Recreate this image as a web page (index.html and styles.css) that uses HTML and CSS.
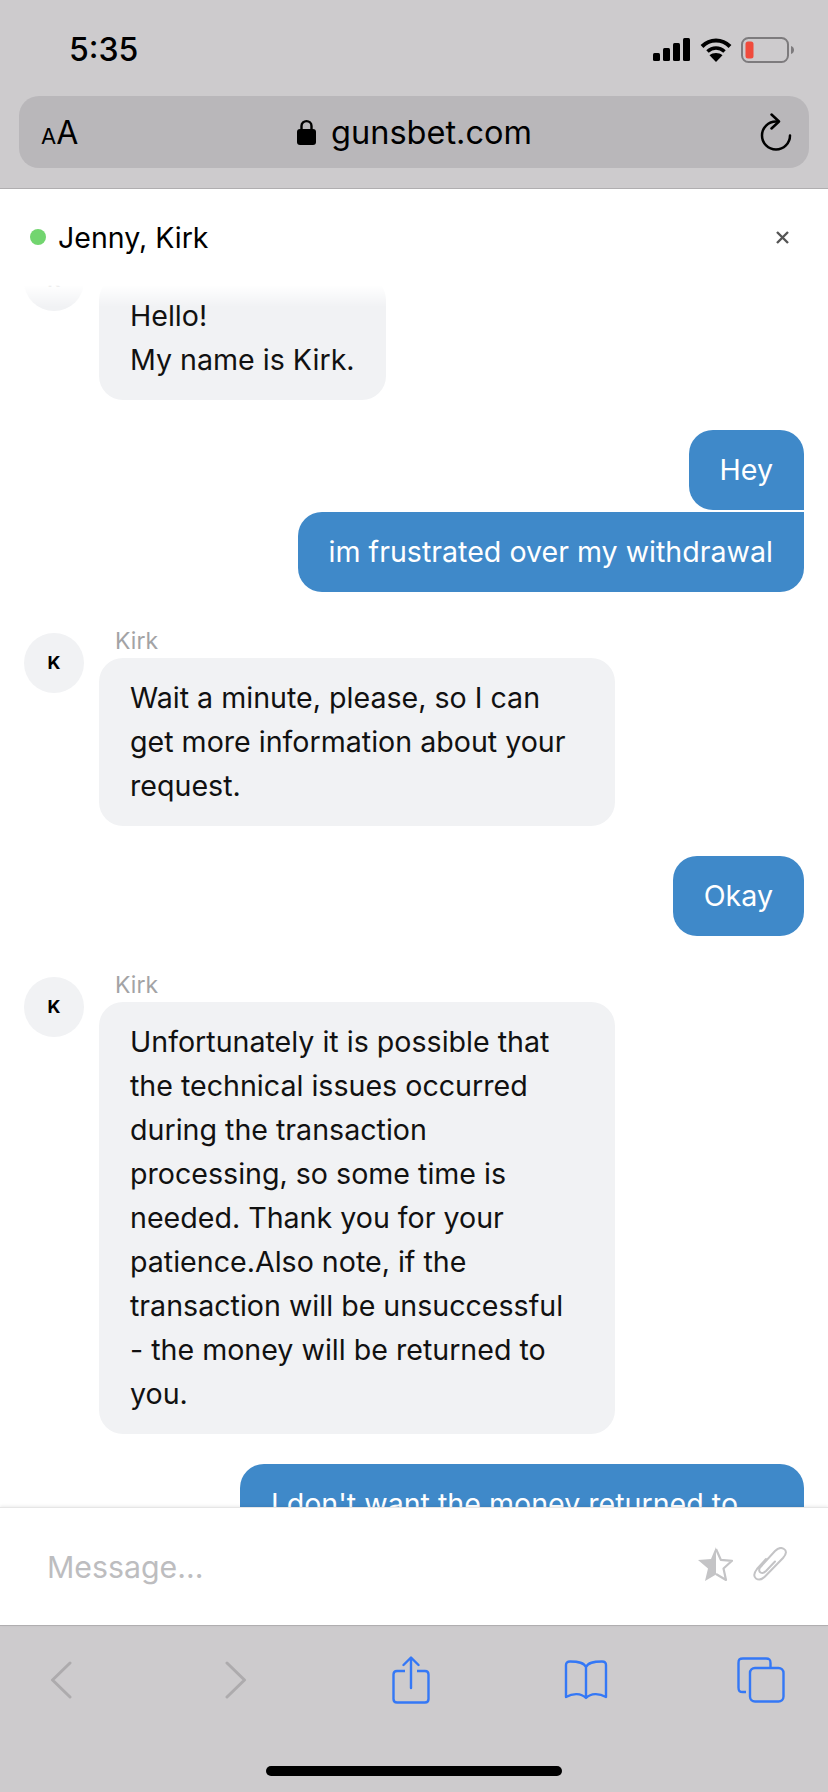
FILE: index.html
```html
<!DOCTYPE html>
<html lang="en">
<head>
    <meta charset="UTF-8">
    <meta name="viewport" content="width=device-width, initial-scale=1.0">
    <title>Chat</title>
    <link rel="stylesheet" href="styles.css">
</head>
<body>
    <div class="phone">
        <!-- Safari top -->
        <div class="safari-top">
            <div class="status-bar">
                <span class="time">5:35</span>
                <div class="status-icons">
                    <svg width="37" height="23" viewBox="0 0 37 23">
                        <rect x="0" y="15" width="7" height="8" rx="1.5"/>
                        <rect x="10" y="10" width="7" height="13" rx="1.5"/>
                        <rect x="20" y="5" width="7" height="18" rx="1.5"/>
                        <rect x="30" y="0" width="7" height="23" rx="1.5"/>
                    </svg>
                    <svg width="32" height="24" viewBox="0 0 32 24">
                        <path d="M2 8.5 C10 0.5 22 0.5 30 8.5" fill="none" stroke="#000" stroke-width="4"/>
                        <path d="M7.5 13.5 C12.5 8.8 19.5 8.8 24.5 13.5" fill="none" stroke="#000" stroke-width="3.6"/>
                        <path d="M16 24 L9.5 17.3 C13 14.2 19 14.2 22.5 17.3 Z"/>
                    </svg>
                    <svg class="battery" width="54" height="26" viewBox="0 0 54 26">
                        <rect x="1" y="1" width="46" height="24" rx="6.5" fill="none" stroke="#7d7b7d" stroke-width="2"/>
                        <rect x="4.500" y="4.500" width="8" height="17" rx="2.500" fill="#f04b3c"/>
                        <path d="M50 9 C52.500 10 53 11.500 53 13 C53 14.500 52.500 16 50 17 Z" fill="#7d7b7d"/>
                    </svg>
                </div>
            </div>
            <div class="url-bar">
                <span class="aa"><small>A</small>A</span>
                <div class="url">
                    <svg width="19" height="26" viewBox="0 0 19 26">
                        <path d="M4.500 12 V7 C4.500 0.500 14.500 0.500 14.500 7 V12" fill="none" stroke="#000" stroke-width="2.400"/>
                        <rect x="0" y="10" width="19" height="16" rx="3"/>
                    </svg>
                    <span>gunsbet.com</span>
                </div>
                <svg class="reload" width="32" height="38" viewBox="0 0 32 38">
                    <path d="M30 22.500 A14 14 0 1 1 16 8.500 H18" fill="none" stroke="#000" stroke-width="2.500" stroke-linecap="round"/>
                    <path d="M11.500 1.500 L19 8.500 L11.500 15.500" fill="none" stroke="#000" stroke-width="2.500" stroke-linecap="round" stroke-linejoin="round"/>
                </svg>
            </div>
        </div>

        <!-- Chat header -->
        <div class="chat-header">
            <div class="agents">
                <span class="online-dot"></span>
                <span>Jenny, Kirk</span>
            </div>
            <svg width="15" height="15" viewBox="0 0 15 15">
                <path d="M2 2 L13 13 M13 2 L2 13" stroke="#555" stroke-width="2.400"/>
            </svg>
        </div>

        <!-- Messages, scrolled part way down -->
        <div class="messages">
            <div class="messages-inner">
                <div class="row-agent first">
                    <div class="avatar">K</div>
                    <div class="bubble agent">Hello!<br>My name is Kirk.</div>
                </div>

                <div class="row-user group">
                    <div class="bubble user top">Hey</div>
                    <div class="bubble user bottom">im frustrated over my withdrawal</div>
                </div>

                <div class="row-agent">
                    <div class="avatar">K</div>
                    <div class="agent-col">
                        <div class="agent-name">Kirk</div>
                        <div class="bubble agent">Wait a minute, please, so I can get more information about your request.</div>
                    </div>
                </div>

                <div class="row-user">
                    <div class="bubble user">Okay</div>
                </div>

                <div class="row-agent">
                    <div class="avatar">K</div>
                    <div class="agent-col">
                        <div class="agent-name">Kirk</div>
                        <div class="bubble agent">Unfortunately it is possible that the technical issues occurred during the transaction processing, so some time is needed. Thank you for your patience.Also note, if the transaction will be unsuccessful - the money will be returned to you.</div>
                    </div>
                </div>

                <div class="row-user">
                    <div class="bubble user wide">I don't want the money returned to me</div>
                </div>
            </div>
            <div class="top-fade"></div>
        </div>

        <!-- Message input -->
        <div class="composer">
            <span class="placeholder">Message...</span>
            <div class="composer-icons">
                <svg width="38" height="36" viewBox="0 0 38 36">
                    <path d="M19 1 L19 28.500 L8 35 L11 22.500 L1 14 L14 13 Z" fill="#c4c4c6"/>
                    <path d="M19 3 L23.800 13.800 L35 14.800 L26.500 22.500 L29 34 L19 28" fill="none" stroke="#c4c4c6" stroke-width="2.200" stroke-linejoin="round"/>
                </svg>
                <svg width="36" height="34" viewBox="0 0 36 34">
                    <path d="M14 12 L5 22 C1 27 2 30 4 31.500 C7 33.500 10 32.500 13 29.500 L31 11 C35 6.500 34.500 3.500 32 2 C29 0 26 1 23 4 L8.500 20 C6.500 22.500 7 24.500 8.500 25.500 C10 26.500 12 26 14 24 L23 14.500" fill="none" stroke="#c4c4c6" stroke-width="2" stroke-linecap="round"/>
                </svg>
            </div>
        </div>

        <!-- Safari bottom -->
        <div class="safari-bottom">
            <div class="toolbar">
                <svg width="22" height="38" viewBox="0 0 22 38"><path d="M20 2 L2.500 19 L20 36" fill="none" stroke="#adabad" stroke-width="3" stroke-linecap="round" stroke-linejoin="round"/></svg>
                <svg width="22" height="38" viewBox="0 0 22 38"><path d="M2 2 L19.500 19 L2 36" fill="none" stroke="#adabad" stroke-width="3" stroke-linecap="round" stroke-linejoin="round"/></svg>
                <svg width="38" height="48" viewBox="0 0 38 48">
                    <path d="M13 15 H5 C2.500 15 1.500 16 1.500 18.500 V43 C1.500 45.500 2.500 46.500 5 46.500 H33 C35.500 46.500 36.500 45.500 36.500 43 V18.500 C36.500 16 35.500 15 33 15 H25" fill="none" stroke="#3478f6" stroke-width="2.400"/>
                    <path d="M19 32 V2 M11.500 9 L19 1.500 L26.500 9" fill="none" stroke="#3478f6" stroke-width="2.400" stroke-linecap="round" stroke-linejoin="round"/>
                </svg>
                <svg width="44" height="40" viewBox="0 0 44 40">
                    <path d="M22 7 C20 2.500 15 1.500 6 1.500 C3.500 1.500 2 2.500 2 5 V37 C9 33 17 33 22 38 C27 33 35 33 42 37 V5 C42 2.500 40.500 1.500 38 1.500 C29 1.500 24 2.500 22 7 V38" fill="none" stroke="#3478f6" stroke-width="2.400" stroke-linejoin="round"/>
                </svg>
                <svg width="48" height="46" viewBox="0 0 48 46">
                    <path d="M9 35 H6 C2.500 35 1.500 34 1.500 30.500 V6 C1.500 2.500 2.500 1.500 6 1.500 H29 C32.500 1.500 33.500 2.500 33.500 6 V11" fill="none" stroke="#3478f6" stroke-width="2.400"/>
                    <rect x="13" y="11" width="33.500" height="33.500" rx="5" fill="none" stroke="#3478f6" stroke-width="2.400"/>
                </svg>
            </div>
            <div class="home-bar"></div>
        </div>
    </div>
</body>
</html>
```

FILE: styles.css
```css
* {
    box-sizing: border-box;
}

body {
    margin: 0;
    font-family: Inter, "Liberation Sans", sans-serif;
    background-color: #fff;
}

.phone {
    width: 828px;
    height: 1792px;
    display: flex;
    flex-direction: column;
    overflow: hidden;
}

/* Safari top */
.safari-top {
    height: 189px;
    flex-shrink: 0;
    background-color: #cdcbcd;
    border-bottom: 1px solid #b0aeb0;
    padding: 0 19px;
}

.status-bar {
    height: 96px;
    padding: 3px 14px 0 50px;
    display: flex;
    justify-content: space-between;
    align-items: center;
}

.time {
    font-size: 32px;
    font-weight: 500;
    color: #000;
}

.status-icons {
    display: flex;
    align-items: center;
    gap: 10px;
}

.battery {
    margin-left: -1px;
}

.url-bar {
    height: 72px;
    background-color: #b9b7ba;
    border-radius: 20px;
    padding: 0 17px 0 22px;
    display: flex;
    align-items: center;
    justify-content: space-between;
    color: #000;
}

.aa {
    font-size: 32px;
    width: 48px;
}

.aa small {
    font-size: 22px;
}

.url {
    display: flex;
    align-items: center;
    gap: 15px;
    font-size: 32.500px;
    margin-left: -20px;
}

.reload {
    margin-top: 0;
}

/* Chat header */
.chat-header {
    height: 96px;
    flex-shrink: 0;
    background-color: #fff;
    padding: 0 38px 0 30px;
    display: flex;
    align-items: center;
    justify-content: space-between;
}

.agents {
    display: flex;
    align-items: center;
    gap: 12px;
    font-size: 28.500px;
    color: #000;
}

.online-dot {
    width: 16px;
    height: 16px;
    border-radius: 50%;
    background-color: #72d56f;
}

/* Messages */
.messages {
    flex: 1 1 0;
    min-height: 0;
    position: relative;
    overflow: hidden;
    background-color: #fff;
}

.messages-inner {
    margin-top: -34px;
    padding: 0 24px;
    display: flex;
    flex-direction: column;
    gap: 30px;
}

.top-fade {
    position: absolute;
    top: 0;
    left: 0;
    right: 0;
    height: 22px;
    background: linear-gradient(#fff, rgba(255, 255, 255, 0));
}

.row-agent {
    display: flex;
    gap: 15px;
    align-items: flex-start;
}

.row-agent .avatar {
    margin-top: 11px;
}

.row-agent.first .avatar {
    margin-top: 0;
}

.row-agent.first .bubble {
    margin-top: 25px;
}

.avatar {
    width: 60px;
    height: 60px;
    flex-shrink: 0;
    border-radius: 50%;
    background-color: #f1f2f4;
    padding-bottom: 2px;
    display: flex;
    align-items: center;
    justify-content: center;
    font-size: 18px;
    font-weight: 700;
    color: #000;
}

.agent-col {
    display: flex;
    flex-direction: column;
}

.agent-name {
    height: 36px;
    padding: 3px 0 0 16px;
    font-size: 23px;
    line-height: 32px;
    color: #a3a3a5;
}

.bubble {
    padding: 18px 31px;
    font-size: 28.600px;
    line-height: 44px;
    border-radius: 24px;
}

.bubble.agent {
    background-color: #f1f2f4;
    color: #111;
}

.agent-col .bubble.agent {
    width: 516px;
}

.bubble.user {
    background-color: #3f89c9;
    color: #fff;
}

.bubble.user.top {
    border-bottom-right-radius: 0;
}

.bubble.user.bottom {
    border-top-right-radius: 0;
}

.bubble.user.wide {
    width: 564px;
}

.row-user {
    display: flex;
    flex-direction: column;
    align-items: flex-end;
}

.row-user.group {
    gap: 2px;
}

/* Message input */
.composer {
    height: 119px;
    flex-shrink: 0;
    position: relative;
    background-color: #fff;
    border-top: 1px solid #e6e6e6;
    border-bottom: 1px solid #b0aeb0;
    box-shadow: 0 -1px 3px rgba(0, 0, 0, 0.08);
    padding: 0 40px 0 47px;
    display: flex;
    align-items: center;
    justify-content: space-between;
}

.placeholder {
    font-size: 30.300px;
    color: #bdbdbf;
}

.composer-icons {
    display: flex;
    align-items: center;
    gap: 17px;
    margin-top: -5px;
}

/* Safari bottom */
.safari-bottom {
    height: 166px;
    flex-shrink: 0;
    background-color: #cdcbcd;
    display: flex;
    flex-direction: column;
    align-items: center;
}

.toolbar {
    width: 100%;
    height: 140px;
    padding: 0 35px 32px 29px;
    display: flex;
    align-items: center;
    justify-content: space-between;
}

.toolbar > svg {
    flex: 0 0 64px;
}

.home-bar {
    width: 296px;
    height: 10px;
    border-radius: 5px;
    background-color: #000;
}
```
